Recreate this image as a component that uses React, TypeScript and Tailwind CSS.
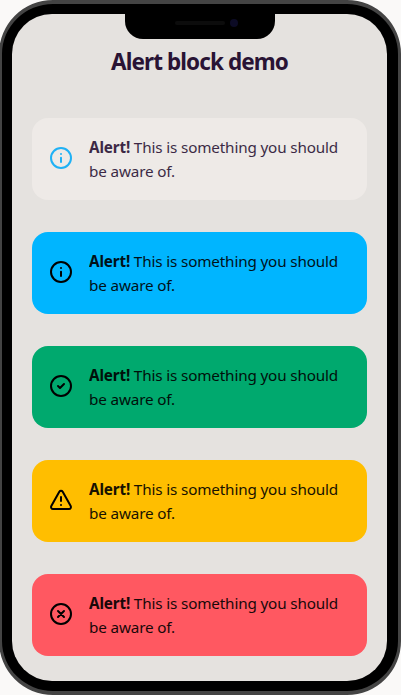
import type { ReactNode } from "react";

const Icon = ({ children, className = "" }: { children: ReactNode; className?: string }) => (
  <svg
    viewBox="0 0 24 24"
    fill="none"
    stroke="currentColor"
    strokeWidth="2"
    strokeLinecap="round"
    strokeLinejoin="round"
    className={`mb-px size-6 shrink-0 ${className}`}
  >
    {children}
  </svg>
);

const InfoIcon = ({ className }: { className?: string }) => (
  <Icon className={className}>
    <circle cx="12" cy="12" r="10" />
    <path d="M12 11.8v4.2M12 8h.01" />
  </Icon>
);

const alerts = [
  { box: "bg-[#eeeae7] text-[#291334]", icon: <InfoIcon className="text-[#1fb1f5]" /> },
  { box: "bg-[#00b5ff] text-black", icon: <InfoIcon /> },
  {
    box: "bg-[#00a96e] text-black",
    icon: (
      <Icon>
        <circle cx="12" cy="12" r="10" />
        <path d="m9 12 2 2 4-4" />
      </Icon>
    ),
  },
  {
    box: "bg-[#ffbe00] text-black",
    icon: (
      <Icon>
        <path d="M10.3 3.7 2.3 18a2 2 0 0 0 1.7 3h16a2 2 0 0 0 1.7-3l-8-14.3a2 2 0 0 0-3.4 0Z" />
        <path d="M12 9v4M12 17h.01" />
      </Icon>
    ),
  },
  {
    box: "bg-[#ff5861] text-black",
    icon: (
      <Icon>
        <circle cx="12" cy="12" r="10" />
        <path d="m15 9-6 6M9 9l6 6" />
      </Icon>
    ),
  },
];

export default function App() {
  return (
    <div className="h-[695px] w-[401px] overflow-hidden bg-[#faf9f8] font-['Noto_Sans',sans-serif]">
      <div className="-mx-px h-[695px] w-[402px] rounded-[54px] border-x-[3px] border-y-4 border-[#444444] bg-black px-2.5 py-2.5">
        <div className="relative h-full w-[375px] rounded-[40px] bg-[#e5e2df] px-5 pt-8">
          <div className="absolute top-[-2px] left-[112.5px] flex h-[27px] w-[150px] rounded-b-[18px] bg-black">
            <div className="mt-[9px] ml-[50px] h-1 w-[50px] rounded-sm bg-[#0c0c0c]" />
            <div className="mt-[7px] ml-[5px] size-2 rounded-full bg-[#0c0b25]" />
          </div>
          <h1 className="h-8 text-center text-[22.5px] leading-8 font-bold tracking-[-0.9px] whitespace-nowrap text-[#291334]">
            Alert block demo
          </h1>
          <div className="mt-[39.6px] flex flex-col gap-8">
            {alerts.map((alert, i) => (
              <div key={i} className={`flex h-[82px] items-center gap-4 rounded-2xl pl-[17px] ${alert.box}`}>
                {alert.icon}
                <p className="text-[15.25px] leading-6 tracking-[-0.15px] whitespace-nowrap opacity-90">
                  <strong className="font-bold">Alert!</strong> This is something you should
                  <br />
                  be aware of.
                </p>
              </div>
            ))}
          </div>
        </div>
      </div>
    </div>
  );
}
